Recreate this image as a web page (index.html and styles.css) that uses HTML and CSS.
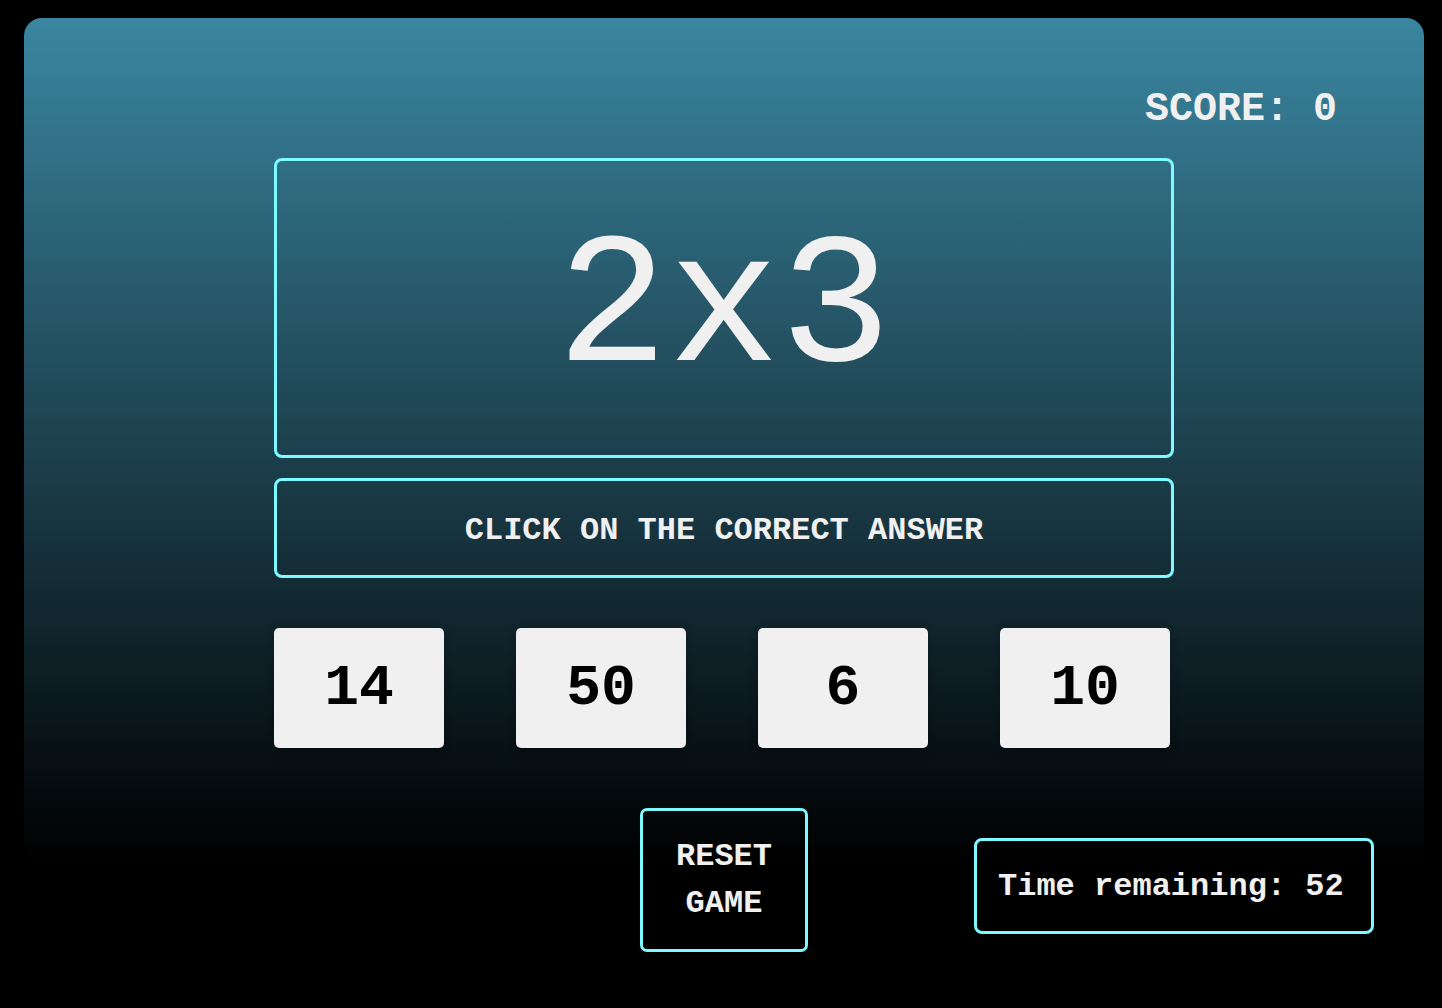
FILE: index.html
```html
<!DOCTYPE html>
<html lang="en">
<head>
<meta charset="utf-8">
<title>Multiplication Game</title>
<link rel="stylesheet" href="styles.css">
</head>
<body>
  <main class="game">
    <div class="score-row">
      <div class="score">SCORE: <span class="score-value">0</span></div>
    </div>
    <div class="question">2x3</div>
    <div class="instruction">CLICK ON THE CORRECT ANSWER</div>
    <div class="choices">
      <div class="choice">14</div>
      <div class="choice">50</div>
      <div class="choice">6</div>
      <div class="choice">10</div>
    </div>
    <div class="bottom-row">
      <div class="spacer"></div>
      <button class="reset">RESET<br>GAME</button>
      <div class="timer-cell">
        <div class="timer">Time remaining: 52</div>
      </div>
    </div>
  </main>
</body>
</html>
```

FILE: styles.css
```css
* {
  box-sizing: border-box;
}

html, body {
  margin: 0;
  background: #000;
}

body {
  padding: 18px 18px 0 24px;
  min-height: 1008px;
  font-family: "Courier New", "Liberation Mono", monospace;
  color: #f0f0f0;
}

.game {
  width: 1400px;
  height: 844px;
  border-radius: 18px;
  background: linear-gradient(to bottom, #3a86a0 0%, #1c3f4c 52%, #000 100%);
  padding-top: 72px;
  display: flex;
  flex-direction: column;
  align-items: center;
}

.game > * {
  flex-shrink: 0;
}

.score-row {
  width: 100%;
  display: flex;
  justify-content: flex-end;
  padding-right: 87px;
  margin-bottom: 28px;
}

.score {
  font-size: 40px;
  line-height: 40px;
  font-weight: bold;
  white-space: pre;
}

.question {
  width: 900px;
  height: 300px;
  border: 3px solid #7df9ff;
  border-radius: 8px;
  display: flex;
  align-items: center;
  justify-content: center;
  font-size: 186px;
  font-weight: normal;
  padding-top: 4px;
}

.instruction {
  margin-top: 20px;
  width: 900px;
  height: 100px;
  border: 3px solid #7df9ff;
  border-radius: 8px;
  display: flex;
  align-items: center;
  justify-content: center;
  font-size: 32px;
  font-weight: bold;
  padding-top: 4px;
  white-space: pre;
}

.choices {
  margin-top: 50px;
  width: 900px;
  display: flex;
  gap: 72px;
}

.choice {
  width: 170px;
  height: 120px;
  background: #f0f0f0;
  color: #000;
  border-radius: 5px;
  box-shadow: 0 4px 8px rgba(0, 0, 0, 0.25);
  display: flex;
  align-items: center;
  justify-content: center;
  font-size: 58px;
  font-weight: bold;
}

.bottom-row {
  margin-top: 60px;
  width: 100%;
  display: grid;
  grid-template-columns: 1fr 168px 1fr;
  align-items: start;
}

.reset {
  width: 168px;
  height: 144px;
  background: transparent;
  border: 3px solid #7df9ff;
  border-radius: 7px;
  color: #f0f0f0;
  font-family: "Courier New", "Liberation Mono", monospace;
  font-size: 32px;
  font-weight: bold;
  line-height: 47px;
  padding: 0;
  text-align: center;
}

.timer-cell {
  display: flex;
  padding-left: 166px;
  padding-top: 30px;
}

.timer {
  width: 400px;
  height: 96px;
  border: 3px solid #7df9ff;
  border-radius: 8px;
  display: flex;
  align-items: center;
  justify-content: flex-start;
  padding-left: 21px;
  font-size: 32px;
  font-weight: bold;
  white-space: pre;
}
```
